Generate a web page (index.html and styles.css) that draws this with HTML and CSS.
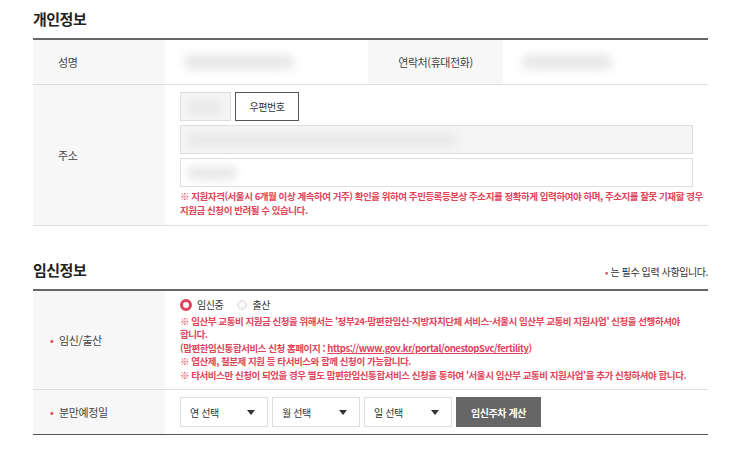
FILE: index.html
```html
<!DOCTYPE html>
<html lang="ko">
<head>
  <meta charset="UTF-8" />
  <meta name="viewport" content="width=device-width, initial-scale=1.0" />
  <title>신청서</title>
  <link rel="stylesheet" href="styles.css">
</head>
<body>
  <div class="wrap">
    <div class="sec-head">
      <h2>개인정보</h2>
    </div>
    <table class="form-table">
      <colgroup>
        <col style="width:132px"><col style="width:203px"><col style="width:135px"><col style="width:205px">
      </colgroup>
      <tr class="row-short">
        <th>성명</th>
        <td><span class="blur blur-name"></span></td>
        <th class="center">연락처(휴대전화)</th>
        <td><span class="blur blur-phone"></span></td>
      </tr>
      <tr>
        <th>주소</th>
        <td colspan="3" class="addr">
          <div class="zip-row">
            <div class="input zip readonly"><span class="blur blur-zip"></span></div>
            <button class="btn-line">우편번호</button>
          </div>
          <div class="input readonly"><span class="blur blur-addr1"></span></div>
          <div class="input tight"><span class="blur blur-addr2"></span></div>
          <p class="note">※ 지원자격(서울시 6개월 이상 계속하여 거주) 확인을 위하여 주민등록등본상 주소지를 정확하게 입력하여야 하며, 주소지를 잘못 기재할 경우 지원금 신청이 반려될 수 있습니다.</p>
        </td>
      </tr>
    </table>

    <div class="sec-head sec-two">
      <h2>임신정보</h2>
      <span class="req-info"><i class="dot">•</i> 는 필수 입력 사항입니다.</span>
    </div>
    <table class="form-table last">
      <colgroup>
        <col style="width:132px"><col>
      </colgroup>
      <tr>
        <th class="req"><i class="dot">•</i> 임신/출산</th>
        <td class="preg">
          <div class="radios">
            <label class="radio"><span class="ring on"></span>임신중</label>
            <label class="radio"><span class="ring"></span>출산</label>
          </div>
          <p class="note">※ 임산부 교통비 지원금 신청을 위해서는 '정부24-맘편한임신-지방자치단체 서비스-서울시 임산부 교통비 지원사업' 신청을 선행하셔야 합니다.<br>
          (맘편한임신통합서비스 신청 홈페이지 : <a href="#">https://www.gov.kr/portal/onestopSvc/fertility</a>)<br>
          ※ 엽산제, 철분제 지원 등 타서비스와 함께 신청이 가능합니다.<br>
          ※ 타서비스만 신청이 되었을 경우 별도 맘편한임신통합서비스 신청을 통하여 '서울시 임산부 교통비 지원사업'을 추가 신청하셔야 합니다.</p>
        </td>
      </tr>
      <tr class="row-short">
        <th class="req"><i class="dot">•</i> 분만예정일</th>
        <td>
          <div class="date-row">
            <div class="select">연 선택<span class="arrow"></span></div>
            <div class="select">월 선택<span class="arrow"></span></div>
            <div class="select">일 선택<span class="arrow"></span></div>
            <button class="btn-dark">임신주차 계산</button>
          </div>
        </td>
      </tr>
    </table>
  </div>
</body>
</html>
```

FILE: styles.css
```css
body {
  margin: 0;
  background: #fff;
  color: #333;
  font-family: "Noto Sans CJK KR", "Noto Sans", sans-serif;
  font-size: 11px;
}
.wrap {
  width: 675px;
  padding: 8px 0 0 33px;
}
.sec-head {
  display: flex;
  justify-content: space-between;
  align-items: flex-end;
  height: 22px;
  margin-bottom: 8px;
}
.sec-head h2 {
  margin: 0;
  font-size: 15px;
  font-weight: bold;
  color: #222;
  letter-spacing: -0.5px;
  line-height: 22px;
}
.sec-two {
  margin-top: 33px;
}
.req-info {
  font-size: 10px;
  color: #333;
  letter-spacing: -0.4px;
  line-height: 14px;
  padding-bottom: 2px;
}
.dot {
  font-style: normal;
  color: #e0445a;
}
.form-table {
  width: 675px;
  border-collapse: collapse;
  table-layout: fixed;
  border-top: 2px solid #666;
}
.form-table th {
  background: #f7f7f7;
  font-weight: normal;
  text-align: left;
  padding: 0 0 0 25px;
  font-size: 11px;
  color: #444;
  letter-spacing: -0.4px;
  border-bottom: 1px solid #ddd;
}
.form-table th.center {
  text-align: center;
  padding: 0;
}
.form-table th.req {
  padding-left: 17px;
}
.form-table th.req .dot {
  margin-right: 3px;
}
.form-table td {
  padding: 0 0 0 15px;
  border-bottom: 1px solid #ddd;
  vertical-align: middle;
}
.form-table.last tr:last-child td,
.form-table.last tr:last-child th {
  border-bottom: 1px solid #555;
}
.row-short {
  height: 45px;
}
.blur {
  display: block;
  background: #e9e9e9;
  filter: blur(4px);
  border-radius: 6px;
}
.blur-name { width: 110px; height: 16px; margin-left: 4px; }
.blur-phone { width: 90px; height: 16px; margin-left: 4px; }
.blur-zip { width: 36px; height: 14px; margin: 7px 0 0 6px; }
.blur-addr1 { width: 270px; height: 14px; margin: 7px 0 0 6px; }
.blur-addr2 { width: 50px; height: 14px; margin: 7px 0 0 6px; }
.addr {
  padding: 7px 0 8px 15px !important;
}
.zip-row {
  display: flex;
  gap: 4px;
  margin-bottom: 4px;
}
.input {
  height: 27px;
  border: 1px solid #ddd;
  background: #fff;
  margin-bottom: 4px;
  width: 511px;
}
.input.tight {
  margin-bottom: 2px;
}
.input.readonly {
  background: #f5f5f5;
}
.input.zip {
  width: 49px;
  margin-bottom: 0;
}
.btn-line {
  width: 64px;
  height: 29px;
  background: #fff;
  border: 1px solid #555;
  font-family: inherit;
  font-size: 10px;
  color: #333;
  letter-spacing: -0.4px;
  padding: 0;
}
.note {
  margin: 0;
  color: #e0445a;
  font-size: 9.5px;
  line-height: 14px;
  font-weight: bold;
  letter-spacing: -0.45px;
  word-break: keep-all;
}
.note a {
  color: #e0445a;
  text-decoration: underline;
}
.preg {
  padding: 6px 2px 7px 15px !important;
}
.preg .note {
  line-height: 13.6px;
}
.radios {
  display: flex;
  gap: 14px;
  height: 16px;
  align-items: center;
  margin-bottom: 2px;
}
.radio {
  display: flex;
  align-items: center;
  gap: 5px;
  font-size: 10px;
  color: #333;
  letter-spacing: -0.4px;
}
.ring {
  width: 8px;
  height: 8px;
  border: 1px solid #ddd;
  border-radius: 50%;
  background: #fff;
  box-shadow: inset 0 0 0 2px #f2f2f2;
}
.ring.on {
  width: 6px;
  height: 6px;
  border: 3px solid #e0445a;
  box-shadow: none;
}
.date-row {
  display: flex;
  gap: 4px;
  align-items: center;
}
.select {
  width: 77px;
  height: 28px;
  border: 1px solid #ddd;
  padding: 0 0 0 9px;
  display: flex;
  align-items: center;
  justify-content: space-between;
  font-size: 10px;
  color: #333;
  letter-spacing: -0.4px;
  background: #fff;
}
.arrow {
  width: 0;
  height: 0;
  border-left: 4px solid transparent;
  border-right: 4px solid transparent;
  border-top: 5px solid #333;
  margin-right: 12px;
}
.btn-dark {
  width: 85px;
  height: 30px;
  background: #666;
  color: #fff;
  border: none;
  font-family: inherit;
  font-size: 10px;
  font-weight: bold;
  letter-spacing: -0.4px;
}
```
